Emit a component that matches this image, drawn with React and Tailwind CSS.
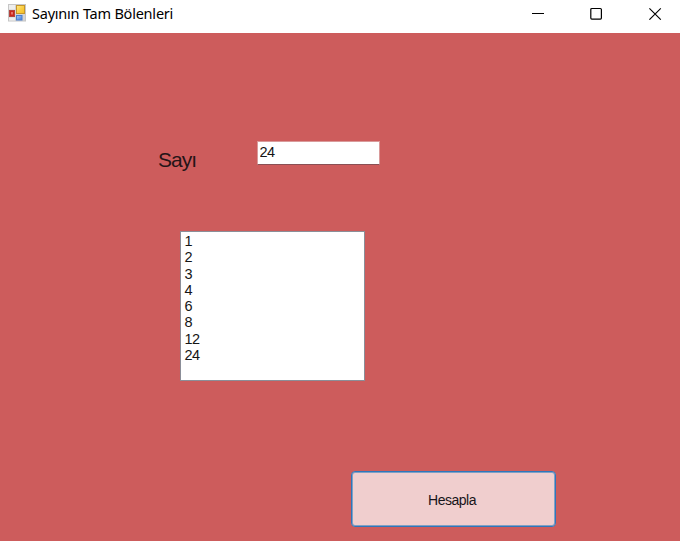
const divisors = [1, 2, 3, 4, 6, 8, 12, 24];

function FormIcon() {
  return (
    <svg width="18" height="18" viewBox="0 0 18 18" aria-hidden="true">
      <defs>
        <linearGradient id="gold" x1="0" y1="0" x2="1" y2="1">
          <stop offset="0" stopColor="#ffe98a" />
          <stop offset="0.5" stopColor="#fbcf45" />
          <stop offset="1" stopColor="#f2bc20" />
        </linearGradient>
        <linearGradient id="blue" x1="0" y1="0" x2="1" y2="1">
          <stop offset="0" stopColor="#a9cdfa" />
          <stop offset="1" stopColor="#3c78d8" />
        </linearGradient>
      </defs>
      <rect x="0.5" y="0.5" width="17" height="16.5" fill="#d4d4d4" stroke="#c6c6c6" />
      <rect x="1" y="1" width="6" height="4.5" fill="#eeeeee" />
      <rect x="1.5" y="6.5" width="5" height="6" fill="#c9281e" stroke="#b3453f" />
      <rect x="3" y="8" width="2" height="2.5" fill="#e5736b" />
      <rect x="1" y="13.5" width="6" height="3" fill="#eeeeee" />
      <rect x="8.5" y="1.5" width="8" height="8" fill="url(#gold)" stroke="#c6962a" />
      <rect x="8.5" y="11.5" width="5.5" height="4.5" fill="url(#blue)" stroke="#4a7fd0" />
    </svg>
  );
}

function TitleBar() {
  return (
    <header className="flex h-[33px] items-start bg-white">
      <div className="ml-2 mt-1">
        <FormIcon />
      </div>
      <h1 className="ml-[6px] mt-[2px] whitespace-nowrap font-['Noto_Sans','Open_Sans',sans-serif] text-[14.5px] leading-[22px] tracking-[-0.22px] text-black">
        Sayının Tam Bölenleri
      </h1>
      <div className="ml-auto mr-[18px] mt-[7px] flex gap-[46px] text-black">
        <svg width="13" height="13" viewBox="0 0 13 13" stroke="currentColor" fill="none">
          <path d="M1 6.5h12" />
        </svg>
        <svg width="13" height="13" viewBox="0 0 13 13" stroke="currentColor" fill="none" strokeWidth="1.2">
          <rect x="0.8" y="1.5" width="10.6" height="10.6" rx="1" />
        </svg>
        <svg width="13" height="13" viewBox="0 0 13 13" stroke="currentColor" fill="none" strokeWidth="1.1">
          <path d="M0.4 1.3l11.4 11.4M11.8 1.3L0.4 12.7" />
        </svg>
      </div>
    </header>
  );
}

export default function App() {
  return (
    <div className="flex h-[541px] w-[680px] flex-col overflow-hidden bg-[#cd5c5c] font-['Liberation_Sans',Arial,sans-serif] text-black">
      <TitleBar />
      <main className="flex flex-col">
        <div className="mt-[108px] flex h-8 items-start">
          <label htmlFor="sayi" className="ml-[158px] mt-[7px] w-[99px] text-[21px] leading-6 tracking-[-1px] text-[#241417]">
            Sayı
          </label>
          <input
            id="sayi"
            defaultValue="24"
            className="h-6 w-[123px] border border-[#d99a9a] border-b-[#8a5054] bg-white px-[1.5px] pb-[2px] text-[14.5px] tracking-[-0.6px] text-[#151515] outline-none"
          />
        </div>
        <ul className="ml-[180px] mt-[58px] h-[150px] w-[184.5px] border border-[#8b8e98] bg-white pl-[3.5px] pt-[1px] text-[14.5px] tracking-[-0.5px] text-[#151515]">
          {divisors.map((n) => (
            <li key={n} className="h-[16.3px] leading-[17px]">{n}</li>
          ))}
        </ul>
        <button className="ml-[351px] mt-[90px] h-[56px] w-[205px] rounded-[4px] border border-[#2f76bb] bg-[#f0cece] pr-[3px] pt-[2px] text-[14px] tracking-[-0.5px] text-[#171419] shadow-[inset_0_0_0_1px_#7fa0c5]">
          Hesapla
        </button>
      </main>
    </div>
  );
}
